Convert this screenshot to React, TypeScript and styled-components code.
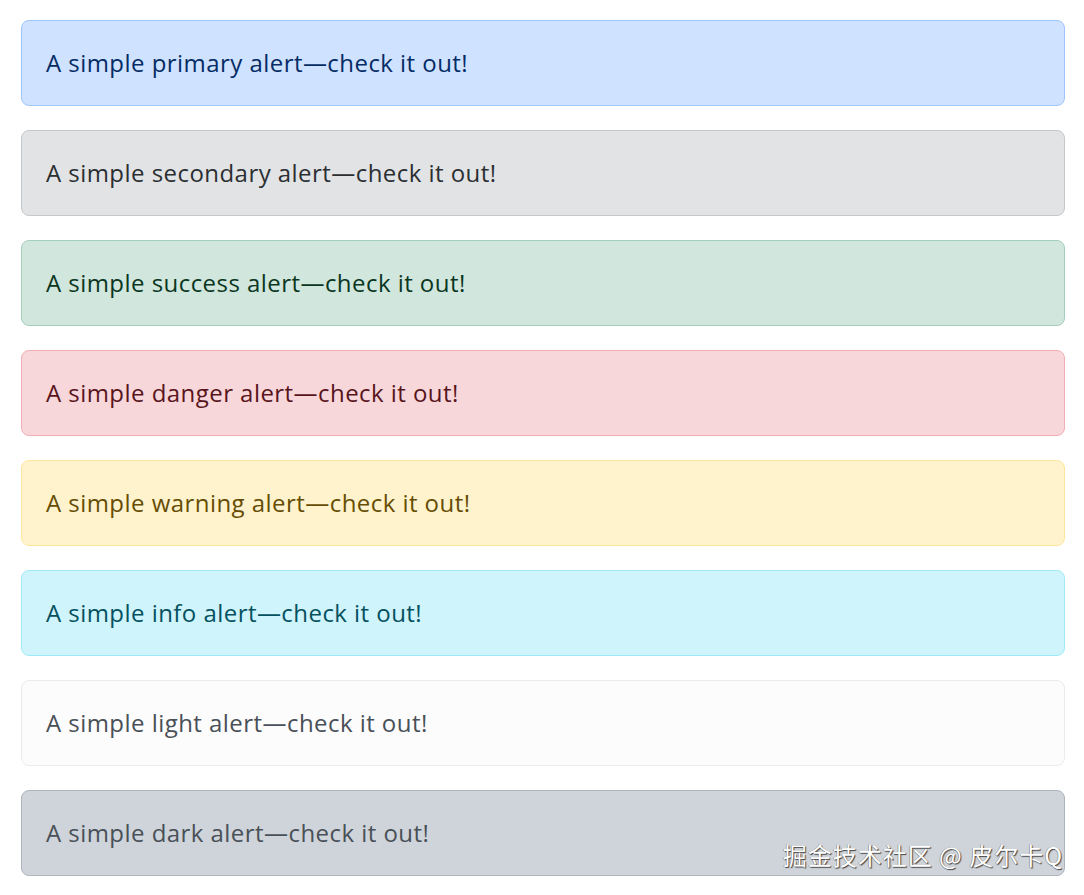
import React from "react";
import styled, { createGlobalStyle } from "styled-components";

const Global = createGlobalStyle`
  html, body { margin: 0; padding: 0; background: #ffffff; }
  body { font-family: "Open Sans", "Noto Sans", sans-serif; }
`;

type Variant = "primary" | "secondary" | "success" | "danger" | "warning" | "info" | "light" | "dark";

const palette: Record<Variant, { bg: string; border: string; color: string }> = {
  primary: { bg: "#cfe2ff", border: "#9ec5fe", color: "#052c65" },
  secondary: { bg: "#e2e3e5", border: "#c4c8cb", color: "#2b2f32" },
  success: { bg: "#d1e7dd", border: "#a3cfbb", color: "#0a3622" },
  danger: { bg: "#f8d7da", border: "#f1aeb5", color: "#58151c" },
  warning: { bg: "#fff3cd", border: "#ffe69c", color: "#664d03" },
  info: { bg: "#cff4fc", border: "#9eeaf9", color: "#055160" },
  light: { bg: "#fcfcfd", border: "#e9ecef", color: "#495057" },
  dark: { bg: "#ced4da", border: "#adb5bd", color: "#495057" },
};

const Page = styled.div`
  position: relative;
  min-height: 895px;
  box-sizing: border-box;
  padding: 20px 19px 0 21px;
  display: flex;
  flex-direction: column;
  gap: 24px;
`;

const Alert = styled.div<{ $v: Variant }>`
  box-sizing: border-box;
  padding: 24px 24px;
  border: 1px solid ${(p) => palette[p.$v].border};
  border-radius: 8px;
  background: ${(p) => palette[p.$v].bg};
  color: ${(p) => palette[p.$v].color};
  font-size: 24px;
  line-height: 36px;
  letter-spacing: 0.45px;
`;

const Watermark = styled.div`
  position: absolute;
  right: 21px;
  top: 839px;
  font-family: "Noto Sans CJK SC", sans-serif;
  font-size: 24px;
  line-height: 32px;
  color: #ffffff;
  text-shadow: 1px 1px 1px #444, -0.5px -0.5px 0 #777;
  letter-spacing: 1px;
`;

const variants: Variant[] = ["primary", "secondary", "success", "danger", "warning", "info", "light", "dark"];

export default function App() {
  return (
    <>
      <Global />
      <Page>
        {variants.map((v) => (
          <Alert key={v} $v={v}>
            A simple {v} alert—check it out!
          </Alert>
        ))}
        <Watermark>掘金技术社区 @ 皮尔卡Q</Watermark>
      </Page>
    </>
  );
}
